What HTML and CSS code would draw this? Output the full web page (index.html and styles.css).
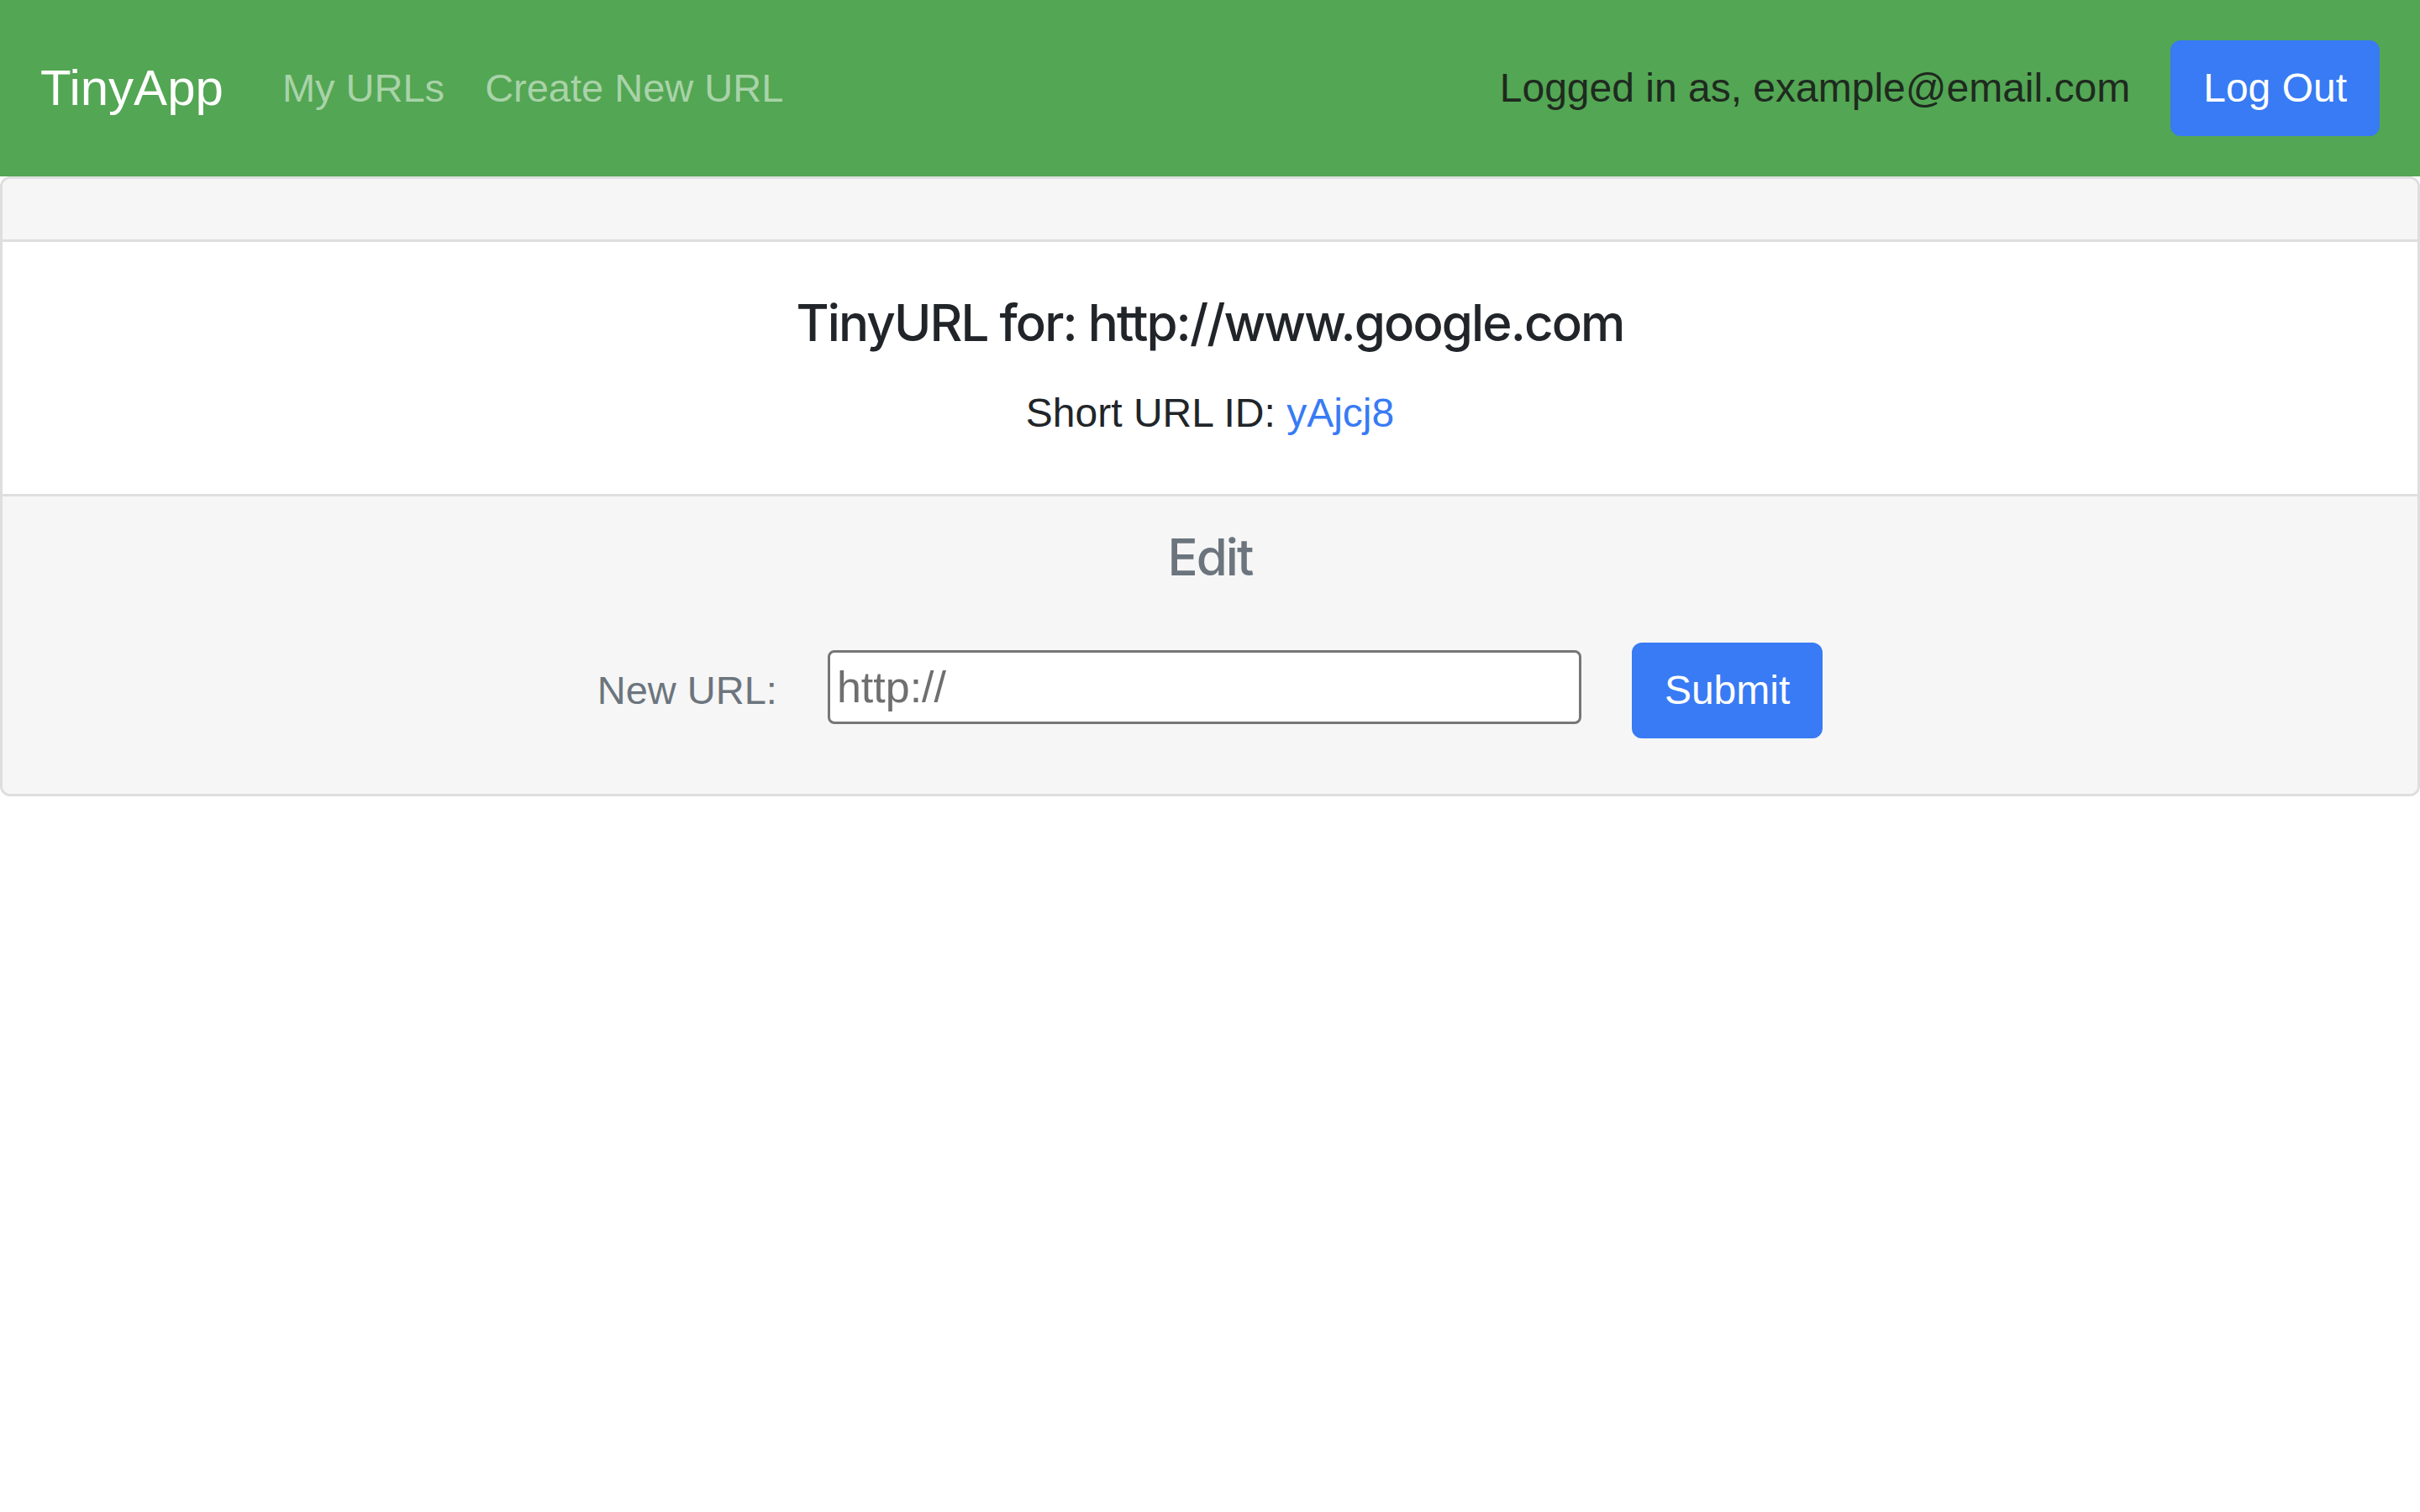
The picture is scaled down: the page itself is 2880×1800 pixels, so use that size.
FILE: index.html
```html
<!DOCTYPE html>
<html lang="en">
<head>
<meta charset="utf-8">
<title>TinyApp</title>
<link rel="stylesheet" href="styles.css">
</head>
<body>
<nav class="navbar">
  <a class="brand" href="#">TinyApp</a>
  <ul class="nav-links">
    <li><a class="nav-link" href="#">My URLs</a></li>
    <li><a class="nav-link" href="#">Create New URL</a></li>
  </ul>
  <div class="nav-right">
    <span class="nav-text">Logged in as, example@email.com</span>
    <button class="btn" type="button">Log Out</button>
  </div>
</nav>
<main class="card">
  <div class="card-header"></div>
  <div class="card-body">
    <h5 class="card-title">TinyURL for: http://www.google.com</h5>
    <p class="card-text">Short URL ID: <a class="link" href="#">yAjcj8</a></p>
  </div>
  <div class="card-footer">
    <h5 class="card-title muted">Edit</h5>
    <form class="edit-form">
      <label class="form-label" for="newurl">New URL:</label>
      <input class="form-input" id="newurl" type="text" value="http://">
      <button class="btn" type="submit">Submit</button>
    </form>
  </div>
</main>
</body>
</html>
```
FILE: styles.css
```css
* { box-sizing: border-box; }
html, body { margin: 0; padding: 0; background: #fff; }
body {
  font-family: "Liberation Sans", Arial, sans-serif;
  font-size: 48px;
  line-height: 1.5;
  color: #212529;
}
.navbar {
  display: flex;
  align-items: center;
  height: 210px;
  padding: 0 48px;
  background: #53a653;
}
.brand {
  font-size: 60px;
  line-height: 90px;
  color: #fff;
  text-decoration: none;
  margin-right: 46px;
}
.nav-links {
  display: flex;
  list-style: none;
  margin: 0;
  padding: 0;
}
.nav-link {
  display: block;
  padding: 0 24px;
  font-size: 47px;
  color: #a9d3a9;
  text-decoration: none;
}
.nav-right {
  margin-left: auto;
  display: flex;
  align-items: center;
  gap: 48px;
}
.nav-text { color: #1e2a1f; }
.btn {
  font-family: inherit;
  font-size: 48px;
  line-height: 72px;
  padding: 18px 36px;
  border: 3px solid #387bf4;
  border-radius: 12px;
  background: #387bf4;
  color: #fff;
}
.card {
  border: 3px solid #dedede;
  border-radius: 12px;
  overflow: hidden;
}
.card-header {
  height: 75px;
  background: #f6f6f6;
  border-bottom: 3px solid #dedede;
}
.card-body {
  padding: 60px;
  text-align: center;
}
.card-title {
  font-family: Inter, "Liberation Sans", sans-serif;
  font-size: 60px;
  font-weight: 500;
  letter-spacing: -1.9px;
  line-height: 72px;
  margin: 0 0 36px;
}
.card-text { margin: 0; }
.link { color: #387bf4; text-decoration: none; }
.card-footer {
  background: #f6f6f6;
  border-top: 3px solid #dedede;
  padding: 36px 60px;
  text-align: center;
}
.card-footer .card-title { margin-bottom: 24px; }
.muted { color: #6c757d; }
.edit-form {
  display: flex;
  justify-content: center;
  align-items: center;
  gap: 60px;
  margin: 66px 0 30px;
}
.form-label { color: #6c757d; font-size: 47px; }
.form-input {
  width: 897px;
  height: 88px;
  margin-bottom: 8px;
  border: 3px solid #767676;
  border-radius: 8px;
  padding: 0 8px;
  font-family: "Liberation Sans", Arial, sans-serif;
  font-size: 52px;
  color: #6f6f6f;
  background: #fff;
}
```
